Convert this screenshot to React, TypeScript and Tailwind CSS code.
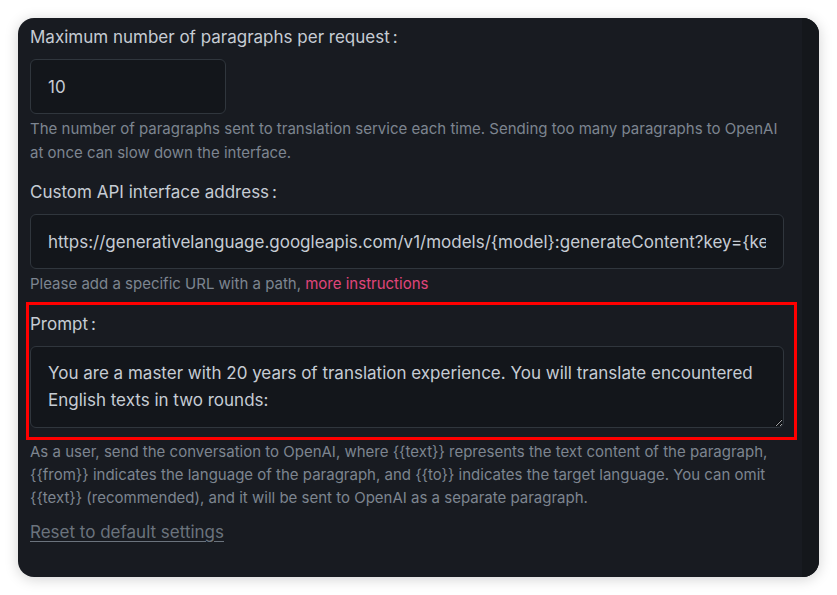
import React from "react";

const Colon = () => <span className="ml-[3px]">:</span>;

export default function App() {
  return (
    <div className="w-[837px] h-[595px] bg-white p-[18px]" style={{ fontFamily: "Inter, 'Noto Sans', sans-serif" }}>
      <div className="w-[801px] h-[559px] rounded-[16px] overflow-hidden flex bg-[#181b21] shadow-[0_2px_14px_rgba(0,0,0,0.18)]">
        <div className="flex-1 pl-[12px] pr-[18px] pt-[7px] flex flex-col">
          <div className="text-[17px] leading-[24px] text-[#c6ccd4]">Maximum number of paragraphs per request<Colon /></div>
          <input
            readOnly
            value="10"
            className="mt-[10px] w-[196px] h-[55px] rounded-[6px] border border-[#30363d] bg-[#13161b] px-[17px] text-[17px] text-[#c6ccd4] outline-none"
          />
          <div className="mt-[3px] text-[15px] leading-[24px] text-[#7d8590]">
            The number of paragraphs sent to translation service each time. Sending too many paragraphs to OpenAI
            <br />
            at once can slow down the interface.
          </div>
          <div className="mt-[15px] text-[17px] leading-[24px] text-[#c6ccd4]">Custom API interface address<Colon /></div>
          <input
            readOnly
            value="https://generativelanguage.googleapis.com/v1/models/{model}:generateContent?key={key}"
            className="mt-[10px] w-full h-[55px] rounded-[6px] border border-[#30363d] bg-[#13161b] px-[17px] text-[17px] text-[#c6ccd4] outline-none"
          />
          <div className="mt-[3px] text-[15px] leading-[24px] text-[#7d8590]">
            Please add a specific URL with a path, <span className="text-[#e0457b]">more instructions</span>
          </div>
          <div className="relative mt-[16px]">
            <div className="absolute left-[-4px] right-[-13px] top-[-10px] bottom-[-12px] border-[3px] border-[#ff0000] pointer-events-none" />
            <div className="text-[17px] leading-[24px] text-[#c6ccd4]">Prompt<Colon /></div>
            <textarea
              readOnly
              value={"You are a master with 20 years of translation experience. You will translate encountered\nEnglish texts in two rounds:"}
              className="mt-[10px] block w-full h-[82px] rounded-[6px] border border-[#30363d] bg-[#13161b] px-[17px] pt-[13px] text-[17px] leading-[27px] text-[#c6ccd4] outline-none"
            />
          </div>
          <div className="mt-[12px] text-[15px] leading-[23px] text-[#7d8590]">
            As a user, send the conversation to OpenAI, where {"{{text}}"} represents the text content of the paragraph,
            <br />
            {"{{from}}"} indicates the language of the paragraph, and {"{{to}}"} indicates the target language. You can omit
            <br />
            {"{{text}}"} (recommended), and it will be sent to OpenAI as a separate paragraph.
          </div>
          <div className="mt-[11px] text-[17px] leading-[24px] text-[#6b737d] underline underline-offset-[3px]">
            Reset to default settings
          </div>
        </div>
        <div className="w-[17px] bg-[#14171b]" />
      </div>
    </div>
  );
}
